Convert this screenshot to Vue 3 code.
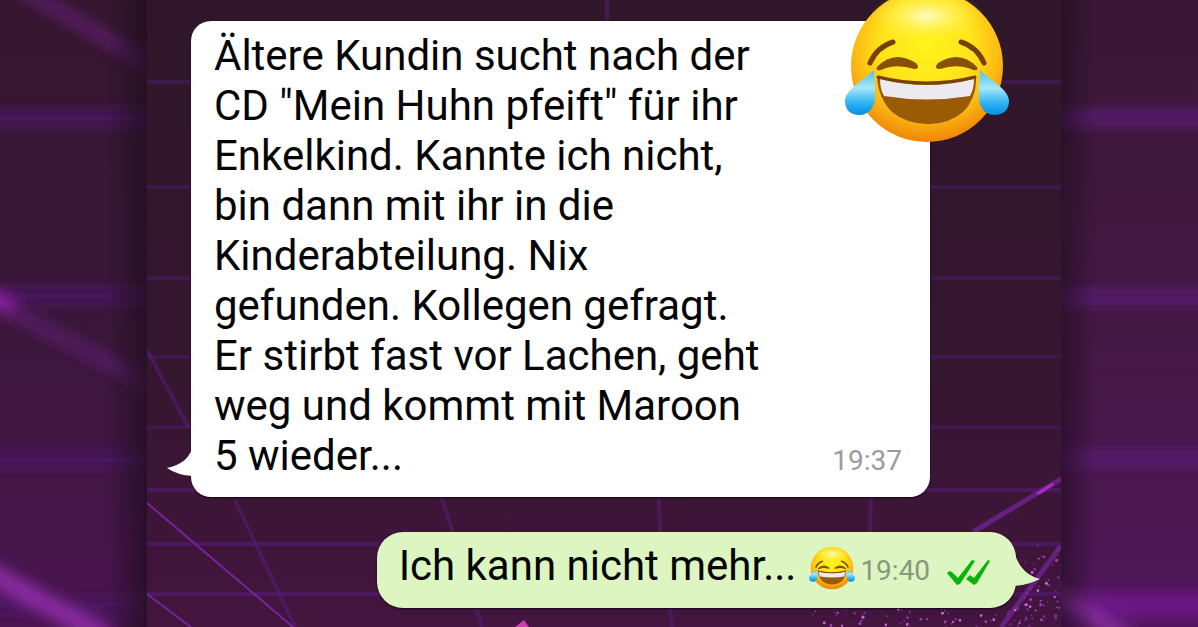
<template>
  <main class="page">
    <!-- blurred side strips -->
    <svg class="side" viewBox="0 0 147 627" preserveAspectRatio="none" aria-hidden="true">
      <defs>
        <linearGradient id="sideLeft" x1="0" y1="0" x2="0" y2="1">
          <stop offset="0" stop-color="#36172f" />
          <stop offset=".5" stop-color="#3a1739" />
          <stop offset="1" stop-color="#4a1450" />
        </linearGradient>
        <linearGradient id="shadeLeft">
          <stop offset="0" stop-color="#1c0d1c" stop-opacity="0" />
          <stop offset="1" stop-color="#1c0d1c" stop-opacity=".7" />
        </linearGradient>
        <filter id="soft" filterUnits="userSpaceOnUse" x="-80" y="-60" width="320" height="760">
          <feGaussianBlur stdDeviation="7" />
        </filter>
      </defs>
      <rect width="147" height="627" fill="url(#sideLeft)" />
      <g filter="url(#soft)" fill="none">
        <path d="M-60 118H220M-60 296H220M-60 460H220M-60 605H220" stroke="#4a1660" stroke-width="16" />
        <path d="M20 -12L170 76M-20 295L170 395" stroke="#561d66" stroke-width="14" />
        <path d="M-30 561L110 640" stroke="#8a2aa2" stroke-width="20" />
        <path d="M-20 291L12 308" stroke="#8b1ba2" stroke-width="16" />
      </g>
      <rect x="107" width="40" height="627" fill="url(#shadeLeft)" />
    </svg>

    <section class="chat">
      <svg class="grid" viewBox="0 0 914 627" preserveAspectRatio="none" aria-hidden="true">
        <defs>
          <linearGradient id="chatBg" x1="0" y1="0" x2="0" y2="1">
            <stop offset="0" stop-color="#2f1729" />
            <stop offset=".6" stop-color="#35162f" />
            <stop offset="1" stop-color="#43153f" />
          </linearGradient>
        </defs>
        <rect width="914" height="627" fill="url(#chatBg)" />
        <path
          v-for="(y, i) in rows"
          :key="y"
          :d="`M0 ${y}H914`"
          :stroke="i < 5 ? '#43195a' : '#4e1966'"
          stroke-width="4"
          :opacity="i < 5 ? 0.7 : 0.85"
        />
        <g fill="none" stroke="#5b1b7d" stroke-width="4">
          <path d="M0 350L42 428M88 500L148 627M294 497L306 532M329 608L335 627M512 497L513 532M523 608L525 627M724 497L723 532M460 0V21" opacity=".5" />
          <path d="M0 503L146 627M0 594L44 627" stroke="#76239a" stroke-width="2" />
          <path d="M914 479L826 532M914 546L854 627" stroke="#64207f" stroke-width="5" />
          <path d="M890 494L906 484" stroke="#a52cc4" stroke-width="3" />
        </g>
        <circle v-for="(s, i) in sparks" :key="i" :cx="s.x" :cy="s.y" :r="s.r" :fill="s.c" />
        <path d="M368 627L377 620L382 627Z" fill="#c840b0" />
      </svg>

      <article class="bubble incoming">
        <svg class="tail" viewBox="0 0 26 34" aria-hidden="true">
          <path d="M26 0C24 14 14 21 0 24Q10 31 26 32Z" fill="#fff" />
        </svg>
        <p class="text">{{ question }}</p>
        <time class="time">19:37</time>
        <JoyFace class="face-big" />
      </article>

      <article class="bubble outgoing">
        <p class="text">Ich kann nicht mehr...</p>
        <JoyFace class="face-small" />
        <time class="time">19:40</time>
        <svg class="checks" viewBox="0 0 44 28" role="img" aria-label="gelesen">
          <path d="M1 14Q3 11 6 13L12 19L26 1L29 2L14 25L11 26Z" fill="#09b30b" />
          <path d="M20 20L24 16L28 19L42 1L44 2L31 24L28 26Z" fill="#09b30b" />
        </svg>
        <svg class="tail" viewBox="0 0 26 38" aria-hidden="true">
          <path d="M0 0C4 15 12 24 26 28Q14 34 0 35Z" fill="#dcf5c1" />
        </svg>
      </article>
    </section>

    <svg class="side" viewBox="0 0 137 627" preserveAspectRatio="none" aria-hidden="true">
      <defs>
        <linearGradient id="sideRight" x1="0" y1="0" x2="0" y2="1">
          <stop offset="0" stop-color="#391735" />
          <stop offset=".5" stop-color="#431842" />
          <stop offset="1" stop-color="#501659" />
        </linearGradient>
        <linearGradient id="shadeRight">
          <stop offset="0" stop-color="#1c0d1c" stop-opacity=".6" />
          <stop offset="1" stop-color="#1c0d1c" stop-opacity="0" />
        </linearGradient>
      </defs>
      <rect width="137" height="627" fill="url(#sideRight)" />
      <g filter="url(#soft)" fill="none">
        <path d="M-60 118H220M-60 297H220M-60 459H220" stroke="#581d70" stroke-width="16" />
        <path d="M-60 605H220" stroke="#6a1886" stroke-width="26" />
        <path d="M-20 585L70 640" stroke="#822a98" stroke-width="16" />
      </g>
      <rect width="34" height="627" fill="url(#shadeRight)" />
    </svg>
  </main>
</template>

<script setup>
import { h } from 'vue'

const question = [
  'Ältere Kundin sucht nach der',
  'CD "Mein Huhn pfeift" für ihr',
  'Enkelkind. Kannte ich nicht,',
  'bin dann mit ihr in die',
  'Kinderabteilung. Nix',
  'gefunden. Kollegen gefragt.',
  'Er stirbt fast vor Lachen, geht',
  'weg und kommt mit Maroon',
  '5 wieder...',
].join('\n')

const rows = [82, 187, 278, 357, 427, 490, 544, 594]

// glitter around the lower right corner
let seed = 7
function rnd() {
  seed = (seed * 16807) % 2147483647
  return seed / 2147483647
}
const colors = ['#7d2a94', '#a83cc0', '#d45fe0', '#642078']
const sparks = Array.from({ length: 120 }, (_, i) => {
  const right = i < 60
  return {
    x: right ? 868 + rnd() * 46 : 660 + rnd() * 230,
    y: right ? 545 + rnd() * 82 : 609 + rnd() * 18,
    r: 0.5 + rnd() * 1.1,
    c: colors[i % 4],
  }
})

// laughing face, drawn once and used in two sizes
const stop = (offset, color) => h('stop', { offset, 'stop-color': color })
const path = (d, fill) => h('path', { d, fill })
const stroke = (d, width) => h('path', {
  d, fill: 'none', stroke: '#784006', 'stroke-width': width, 'stroke-linecap': 'round',
})
function JoyFace() {
  return h('svg', { viewBox: '0 0 164 152', role: 'img', 'aria-label': 'Freudentränen' }, [
    h('defs', [
      h('radialGradient', { id: 'skin', cx: '.5', cy: '.36', r: '.66' }, [
        stop(0, '#fff31c'), stop(0.45, '#ffe41a'), stop(0.72, '#fdbb14'), stop(1, '#ee7f05'),
      ]),
      h('radialGradient', { id: 'shine' }, [
        stop(0, '#fffbc4'), h('stop', { offset: 1, 'stop-color': '#fff23a', 'stop-opacity': 0 }),
      ]),
      h('linearGradient', { id: 'tear', x1: 0, y1: 0, x2: 0, y2: 1 }, [
        stop(0, '#4fbdea'), stop(0.4, '#a5e8fa'), stop(0.75, '#2bb0f2'), stop(1, '#078ee0'),
      ]),
    ]),
    h('circle', { cx: 82, cy: 76, r: 76, fill: 'url(#skin)' }),
    h('ellipse', { cx: 82, cy: 26, rx: 56, ry: 26, fill: 'url(#shine)' }),
    stroke('M25 73Q32 57 48 52', 5),
    stroke('M139 73Q132 57 116 52', 5),
    path('M32 77Q49 59 71 73Q76 79 69 79Q51 73 36 80Q30 81 32 77Z', '#875006'),
    path('M132 77Q115 59 93 73Q88 79 95 79Q113 73 128 80Q134 81 132 77Z', '#875006'),
    path('M32 86Q82 99 131 86Q132 108 118 122Q102 135 82 134Q62 134 47 122Q33 108 32 86Z', '#995c05'),
    path('M35 89Q82 101 129 89Q129 99 125 106Q82 113 39 106Q35 99 35 89Z', '#eceaf0'),
    stroke('M33 87Q82 99 130 87', 3),
    path('M29 80C22 88 0 99 0 111C0 120 6 125 14 125C25 125 29 117 30 108C31 98 29 88 29 80Z', 'url(#tear)'),
    path('M135 80C142 88 164 99 164 111C164 120 158 125 150 125C139 125 135 117 134 108C133 98 135 88 135 80Z', 'url(#tear)'),
  ])
}
</script>

<style>
body { margin: 0; background: #35162f; }
</style>

<style scoped>
.page { display: grid; grid-template-columns: 147fr 914fr 137fr; min-height: 100vh; overflow: hidden; font-family: Roboto, 'Liberation Sans', sans-serif; }
.side { display: block; width: 100%; height: 100%; min-height: 0; }
.chat { position: relative; display: flex; flex-direction: column; gap: 35px; padding: 21px 45px 19px 44px; }
.grid { position: absolute; inset: 0; width: 100%; height: 100%; }

.bubble { position: relative; display: flex; box-sizing: border-box; }
.incoming { align-items: flex-end; justify-content: space-between; margin-right: 86px; padding: 10px 28px 16px 23px; border-radius: 20px; background: #fff; box-shadow: 0 1px 2px #160818; }
.outgoing { align-self: flex-end; align-items: center; width: 77.5%; padding: 9px 26px 17px 22px; border-radius: 26px; background: #dcf5c1; box-shadow: 0 1px 2px #160818; }
.text { margin: 0; font-size: 42px; line-height: 50px; color: #050505; white-space: pre; }
.time { font-size: 28px; line-height: 40px; color: #9b9b9b; }
.outgoing .time { margin: 10px 0 0 5px; color: #87987c; }

.tail { position: absolute; }
.incoming .tail { left: -24px; bottom: 19px; width: 26px; height: 34px; }
.outgoing .tail { right: -24px; bottom: 19px; width: 26px; height: 38px; }

.face-big { position: absolute; top: -31px; right: -79px; width: 164px; height: 152px; }
.face-small { width: 46px; height: 46px; margin: 4px 0 0 13px; }
.checks { width: 44px; height: 28px; margin: 14px 0 0 auto; }
</style>
